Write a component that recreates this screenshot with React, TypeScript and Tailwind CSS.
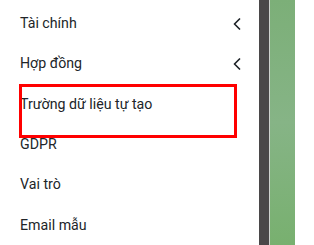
import React from "react";

const items = [
  { label: "Tài chính", chevron: true },
  { label: "Hợp đồng", chevron: true },
  { label: "Trường dữ liệu tự tạo", chevron: false },
  { label: "GDPR", chevron: false },
  { label: "Vai trò", chevron: false },
  { label: "Email mẫu", chevron: false },
];

function Chevron() {
  return (
    <svg width="8" height="12" viewBox="0 0 8 12" className="mt-[2px]">
      <polyline points="6.5,1 1.5,6 6.5,11" fill="none" stroke="#1f2328" strokeWidth="1.7" strokeLinecap="round" strokeLinejoin="round" />
    </svg>
  );
}

export default function App() {
  return (
    <div className="relative flex h-[245px] w-[314px] overflow-hidden bg-white" style={{ fontFamily: "Roboto, 'Noto Sans', sans-serif" }}>
      <div className="flex w-[259px] flex-col pt-[3px]">
        {items.map((it) => (
          <div key={it.label} className="flex h-[41px] items-center justify-between pl-[20px] pr-[18px] text-[14.2px] leading-[20px] text-[#212529]">
            <span>{it.label}</span>
            {it.chevron && <Chevron />}
          </div>
        ))}
      </div>
      <div className="w-[10px] bg-[#4a4849]" />
      <div className="w-[1px] bg-[#cfd3d0]" />
      <div className="w-[25px] bg-gradient-to-b from-[#7caf78] via-[#86b486] to-[#78b06f]" />
      <div className="flex-1 bg-white" />
      <div className="absolute left-[19px] top-[84px] h-[54px] w-[218px] border-[3px] border-[#ff0000]" />
    </div>
  );
}
